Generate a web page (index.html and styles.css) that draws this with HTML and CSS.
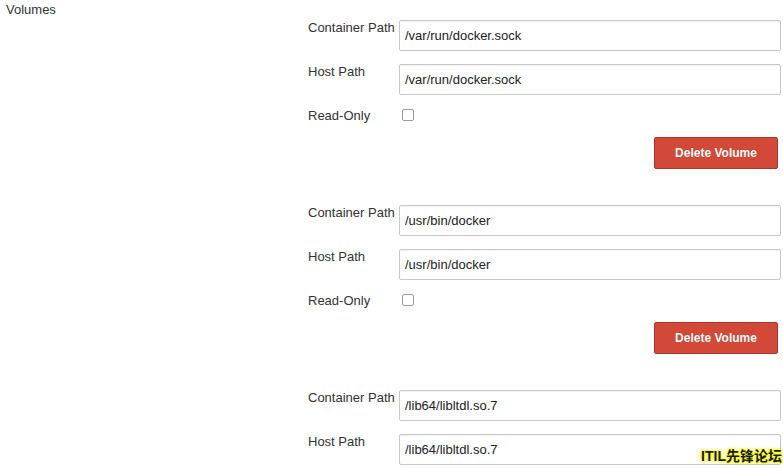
FILE: index.html
```html
<!DOCTYPE html>
<html>
<head>
<meta charset="utf-8">
<link rel="stylesheet" href="styles.css">
</head>
<body>
<div class="section">
  <div class="section-title">Volumes</div>
  <div class="section-body">
    <div class="block">
      <div class="row"><label class="lbl">Container Path</label><input class="field" type="text" value="/var/run/docker.sock"></div>
      <div class="row"><label class="lbl">Host Path</label><input class="field" type="text" value="/var/run/docker.sock"></div>
      <div class="row ro"><label class="lbl">Read-Only</label><input class="check" type="checkbox"></div>
      <div class="actions"><button class="btn-del">Delete Volume</button></div>
    </div>
    <div class="block">
      <div class="row"><label class="lbl">Container Path</label><input class="field" type="text" value="/usr/bin/docker"></div>
      <div class="row"><label class="lbl">Host Path</label><input class="field" type="text" value="/usr/bin/docker"></div>
      <div class="row ro"><label class="lbl">Read-Only</label><input class="check" type="checkbox"></div>
      <div class="actions"><button class="btn-del">Delete Volume</button></div>
    </div>
    <div class="block">
      <div class="row"><label class="lbl">Container Path</label><input class="field" type="text" value="/lib64/libltdl.so.7"></div>
      <div class="row"><label class="lbl">Host Path</label><input class="field" type="text" value="/lib64/libltdl.so.7"></div>
    </div>
  </div>
</div>
<div class="watermark">ITIL先锋论坛</div>
</body>
</html>
```
FILE: styles.css
```css
html, body {
  margin: 0;
  padding: 0;
  background: #fff;
  overflow: hidden;
}
body {
  width: 783px;
  height: 468px;
  position: relative;
  font-family: "Liberation Sans", Arial, sans-serif;
  font-size: 13px;
  color: #333;
}
.section {
  display: flex;
}
.section-title {
  width: 302px;
  padding: 2px 0 0 6px;
  line-height: 15px;
  color: #333;
}
.section-body {
  width: 475px;
  padding-top: 20px;
}
.block {
  display: flex;
  flex-direction: column;
  margin-bottom: 36px;
}
.row {
  display: flex;
  align-items: flex-start;
  margin-bottom: 13px;
}
.row.ro {
  margin-top: 0;
  margin-bottom: 0;
}
.lbl {
  width: 91px;
  line-height: 15px;
  color: #333;
}
.field {
  box-sizing: border-box;
  width: 382px;
  height: 31px;
  margin: 0;
  padding: 0 5px;
  border: 1px solid #c8c8c8;
  border-radius: 2px;
  box-shadow: inset 0 1px 1px rgba(0,0,0,0.05);
  font-family: "Liberation Sans", Arial, sans-serif;
  font-size: 13px;
  color: #222;
  background: #fff;
}
.check {
  appearance: none;
  -webkit-appearance: none;
  box-sizing: border-box;
  width: 12px;
  height: 12px;
  margin: 1px 0 0 3px;
  border: 1px solid #9a9a9a;
  border-radius: 2px;
  background: #fff;
}
.actions {
  display: flex;
  justify-content: flex-end;
  padding-right: 5px;
  margin-top: 14px;
}
.btn-del {
  box-sizing: border-box;
  width: 124px;
  height: 32px;
  margin: 0;
  border: 1px solid #a9382a;
  border-radius: 2px;
  background: #d24a37;
  color: #fff;
  font-family: "Liberation Sans", Arial, sans-serif;
  font-size: 12px;
  font-weight: bold;
  padding: 0;
  text-shadow: 0 0 1px rgba(120,30,20,0.4);
}
.watermark {
  position: absolute;
  right: 1px;
  bottom: 4px;
  font-family: "Liberation Sans", "Noto Sans CJK SC", sans-serif;
  font-size: 14px;
  font-weight: bold;
  line-height: 16px;
  color: #1a1a1a;
  text-shadow: 0 0 2px #ffff40, 0 0 2px #ffff40, 0 0 3px #ffff00, 1px 1px 2px #ffff00, -1px -1px 2px #ffff00;
}
```
